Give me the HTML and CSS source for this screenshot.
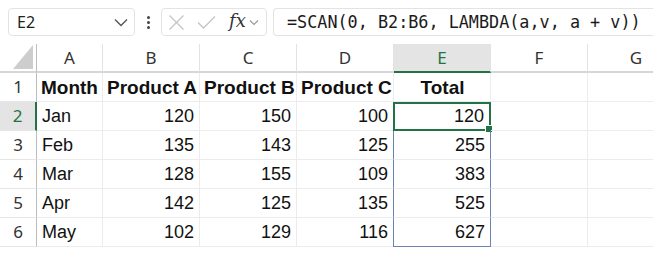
FILE: index.html
```html
<!DOCTYPE html>
<html lang="en">
<head>
  <meta charset="UTF-8" />
  <title>SCAN running total</title>
  <link rel="stylesheet" href="styles.css">
</head>
<body>
  <div class="formula-bar">
    <div class="name-box">
      <span class="cell-ref">E2</span>
      <svg class="chev" width="14" height="9" viewBox="0 0 14 9"><path d="M1 1.5 L7 7.5 L13 1.5" fill="none" stroke="#555" stroke-width="1.4"/></svg>
    </div>
    <div class="dots"><span></span><span></span><span></span></div>
    <div class="fx-box">
      <svg width="17" height="17" viewBox="0 0 17 17"><path d="M1.5 1.5 L15.5 15.5 M15.5 1.5 L1.5 15.5" stroke="#c4c4c4" stroke-width="1.3" fill="none"/></svg>
      <svg class="check" width="19" height="15" viewBox="0 0 19 15"><path d="M1 7.5 L6.5 13 L18 1.5" stroke="#c4c4c4" stroke-width="1.3" fill="none"/></svg>
      <span class="fx">fx</span>
      <svg width="10" height="7" viewBox="0 0 10 7"><path d="M1 1.5 L5 5.5 L9 1.5" fill="none" stroke="#999" stroke-width="1.2"/></svg>
    </div>
    <div class="formula-input">=SCAN(0, B2:B6, LAMBDA(a,v, a + v))</div>
  </div>

  <div class="sheet">
    <div class="corner"><div class="tri"></div></div>
    <div class="col-head">A</div>
    <div class="col-head">B</div>
    <div class="col-head">C</div>
    <div class="col-head">D</div>
    <div class="col-head active">E</div>
    <div class="col-head">F</div>
    <div class="col-head">G</div>

    <div class="row-head">1</div>
    <div class="cell bold">Month</div>
    <div class="cell bold">Product A</div>
    <div class="cell bold">Product B</div>
    <div class="cell bold">Product C</div>
    <div class="cell bold center">Total</div>
    <div class="cell"></div>
    <div class="cell"></div>

    <div class="row-head active">2</div>
    <div class="cell">Jan</div>
    <div class="cell num">120</div>
    <div class="cell num">150</div>
    <div class="cell num">100</div>
    <div class="cell num spill selected">120<span class="handle"></span></div>
    <div class="cell"></div>
    <div class="cell"></div>

    <div class="row-head">3</div>
    <div class="cell">Feb</div>
    <div class="cell num">135</div>
    <div class="cell num">143</div>
    <div class="cell num">125</div>
    <div class="cell num spill">255</div>
    <div class="cell"></div>
    <div class="cell"></div>

    <div class="row-head">4</div>
    <div class="cell">Mar</div>
    <div class="cell num">128</div>
    <div class="cell num">155</div>
    <div class="cell num">109</div>
    <div class="cell num spill">383</div>
    <div class="cell"></div>
    <div class="cell"></div>

    <div class="row-head">5</div>
    <div class="cell">Apr</div>
    <div class="cell num">142</div>
    <div class="cell num">125</div>
    <div class="cell num">135</div>
    <div class="cell num spill">525</div>
    <div class="cell"></div>
    <div class="cell"></div>

    <div class="row-head">6</div>
    <div class="cell">May</div>
    <div class="cell num">102</div>
    <div class="cell num">129</div>
    <div class="cell num">116</div>
    <div class="cell num spill spill-bottom">627</div>
    <div class="cell"></div>
    <div class="cell"></div>
  </div>
</body>
</html>
```

FILE: styles.css
```css
body {
  margin: 0;
  background: #fff;
  width: 653px;
  height: 255px;
  overflow: hidden;
  font-family: "Liberation Sans", Arial, sans-serif;
  color: #111;
}

/* formula bar */
.formula-bar {
  display: flex;
  align-items: center;
  height: 28px;
  padding: 8px 0 0 8px;
}

.name-box {
  width: 111px;
  height: 26px;
  border: 1px solid #e3e3e3;
  border-radius: 4px;
  display: flex;
  align-items: center;
  justify-content: space-between;
  padding: 0 6px 0 8px;
  font-family: "Noto Sans", sans-serif;
  font-size: 16px;
  color: #222;
}

.cell-ref {
  margin-top: -1px;
}

.dots {
  width: 26px;
  display: flex;
  flex-direction: column;
  align-items: center;
  gap: 2px;
}

.dots span {
  width: 3px;
  height: 3px;
  border-radius: 50%;
  background: #444;
}

.fx-box {
  width: 98px;
  height: 26px;
  border: 1px solid #e3e3e3;
  border-radius: 4px;
  display: flex;
  align-items: center;
  padding-left: 6px;
}

.check {
  margin-left: 12px;
}

.fx {
  font-family: "DejaVu Serif", "Liberation Serif", serif;
  font-style: italic;
  font-size: 18px;
  color: #333;
  margin: -3px 3px 0 13px;
}

.formula-input {
  flex: 1;
  margin-left: 6px;
  height: 26px;
  border: 1px solid #e3e3e3;
  border-right: none;
  border-radius: 4px 0 0 4px;
  padding-left: 13px;
  font-family: "DejaVu Sans Mono", monospace;
  font-size: 16.8px;
  line-height: 26px;
  color: #1a1a1a;
  white-space: nowrap;
}

/* sheet grid */
.sheet {
  margin-top: 8px;
  display: grid;
  grid-template-columns: 37px 66px repeat(6, 97px);
  grid-auto-rows: 29px;
}

.corner {
  border-bottom: 2px solid #d6d6d6;
  border-right: 1px solid #bdbdbd;
  display: flex;
  justify-content: flex-end;
  align-items: flex-end;
  padding: 0 3px 2px 0;
}

.tri {
  width: 20px;
  height: 24px;
  background: #cdcdcd;
  clip-path: polygon(100% 0, 100% 100%, 0 100%);
}

.col-head {
  border-bottom: 2px solid #d6d6d6;
  border-right: 1px solid #e2e2e2;
  text-align: center;
  font-family: "Noto Sans", sans-serif;
  font-size: 17px;
  line-height: 27px;
  color: #333;
}

.col-head.active {
  background: #e4e4e4;
  color: #217346;
  border-bottom-color: #217346;
}

.row-head {
  border-right: 1px solid #bdbdbd;
  border-bottom: 1px solid #e6e6e6;
  text-align: center;
  font-family: "Noto Sans", sans-serif;
  font-size: 17px;
  line-height: 28px;
  color: #333;
}

.row-head.active {
  background: #e4e4e4;
  color: #217346;
  border-right: 2px solid #217346;
}

.cell {
  position: relative;
  border-right: 1px solid #ececec;
  border-bottom: 1px solid #ececec;
  padding: 0 5px;
  font-size: 18px;
  line-height: 29px;
  white-space: nowrap;
  overflow: hidden;
}

.bold {
  font-weight: bold;
  font-size: 19px;
  padding: 0 3px 0 4px;
}

.center {
  text-align: center;
}

.num {
  text-align: right;
}

.spill {
  border-left: 1px solid #6a83b5;
  border-right: 1px solid #6a83b5;
  margin-left: -1px;
  overflow: visible;
}

.spill-bottom {
  border-bottom: 1px solid #6a83b5;
}

.selected {
  outline: 2px solid #217346;
  outline-offset: -2px;
  padding-right: 6px;
}

.handle {
  position: absolute;
  right: -3px;
  bottom: -3px;
  width: 6px;
  height: 6px;
  background: #217346;
  border: 1px solid #fff;
}
```
